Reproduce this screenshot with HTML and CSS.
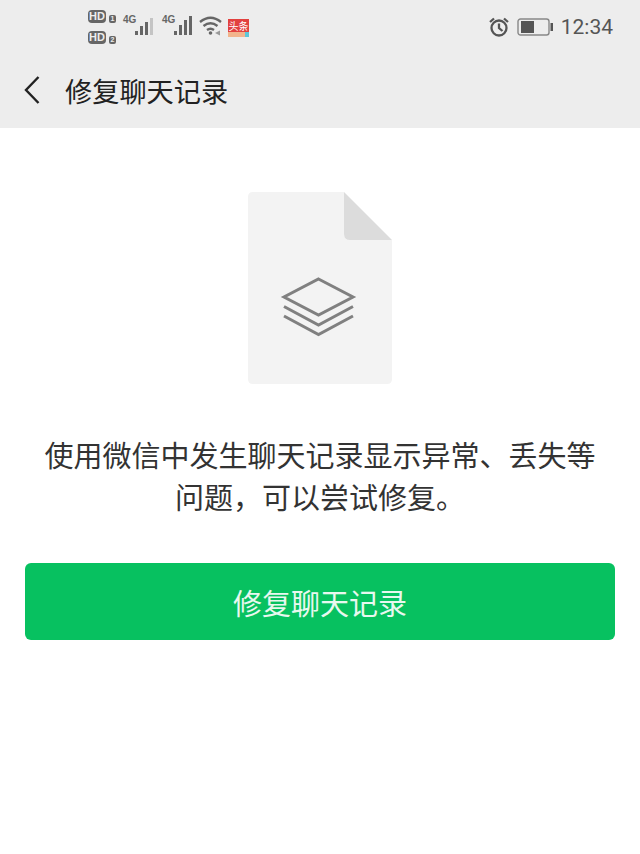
FILE: index.html
```html
<!DOCTYPE html>
<html lang="zh-CN">
<head>
  <meta charset="UTF-8" />
  <title>修复聊天记录</title>
  <link rel="stylesheet" href="styles.css">
</head>
<body>
  <header class="top">
    <div class="status">
      <div class="status-left">
        <div class="sims">
          <div class="sim"><span class="hd">HD</span><span class="sim-num">1</span></div>
          <div class="sim"><span class="hd">HD</span><span class="sim-num">2</span></div>
        </div>
        <div class="signal first">
          <span class="net">4G</span>
          <svg width="20" height="21" viewBox="0 0 20 21">
            <rect x="1" y="17" width="3" height="4" fill="#666"/>
            <rect x="6" y="12" width="3" height="9" fill="#666"/>
            <rect x="11" y="8" width="3" height="13" fill="#666"/>
            <rect x="16" y="4" width="3" height="17" fill="#c4c4c4"/>
          </svg>
        </div>
        <div class="signal">
          <span class="net">4G</span>
          <svg width="20" height="21" viewBox="0 0 20 21">
            <rect x="1" y="17" width="3" height="4" fill="#666"/>
            <rect x="6" y="11" width="3" height="10" fill="#666"/>
            <rect x="11" y="6" width="3" height="15" fill="#666"/>
            <rect x="16" y="2" width="3" height="19" fill="#666"/>
          </svg>
        </div>
        <svg class="wifi" width="25" height="20" viewBox="0 0 25 20" fill="none" stroke="#666" stroke-width="2.4">
          <path d="M1 6 Q11.5 -2.5 22 6"/>
          <path d="M4.5 10 Q11.5 4.5 18.5 10"/>
          <path d="M8 14 Q11.5 11.5 15 14"/>
          <circle cx="11.5" cy="17" r="1.8" fill="#666" stroke="none"/>
          <path d="M16 17 l5 -2.5 v5 z" fill="#999" stroke="none"/>
        </svg>
        <div class="toutiao">
          <span class="toutiao-name">头条</span>
          <span class="toutiao-strip"><span class="toutiao-corner"></span></span>
        </div>
      </div>
      <div class="status-right">
        <svg class="alarm" width="22" height="22" viewBox="0 0 22 22" fill="none" stroke="#555" stroke-width="2.3">
          <circle cx="11" cy="12" r="7.5"/>
          <path d="M11 7.5 V12 L14.5 15"/>
          <path d="M2 6 L6 2.5"/>
          <path d="M20 6 L16 2.5"/>
        </svg>
        <svg width="36" height="18" viewBox="0 0 36 18">
          <rect x="1" y="1" width="31" height="16" rx="2.5" fill="none" stroke="#888" stroke-width="1.4"/>
          <rect x="4" y="3" width="13" height="12" fill="#555"/>
          <rect x="33.5" y="5" width="2.5" height="8" fill="#555"/>
        </svg>
        <span class="time">12:34</span>
      </div>
    </div>
    <div class="nav">
      <svg class="back" width="18" height="30" viewBox="0 0 18 30" fill="none" stroke="#222" stroke-width="2.4">
        <path d="M15.5 2 L3 15 L15.5 28"/>
      </svg>
      <h1 class="title">修复聊天记录</h1>
    </div>
  </header>

  <main class="content">
    <svg class="doc" width="144" height="192" viewBox="0 0 144 192">
      <path d="M5 0 H96 V42 Q96 48 102 48 H144 V187 Q144 192 139 192 H5 Q0 192 0 187 V5 Q0 0 5 0 Z" fill="#f3f3f3"/>
      <path d="M96 0 L144 48 H102 Q96 48 96 42 Z" fill="#dcdcdc"/>
      <g fill="none" stroke="#808080" stroke-width="3">
        <path d="M70.5 87 L105 105 L70.5 123 L36 105 Z"/>
        <path d="M36 114.5 L70.5 133 L105 114.5"/>
        <path d="M36 124 L70.5 142.5 L105 124"/>
      </g>
    </svg>
    <p class="desc">使用微信中发生聊天记录显示异常、丢失等<br>问题，可以尝试修复。</p>
    <button class="repair">修复聊天记录</button>
  </main>
</body>
</html>
```

FILE: styles.css
```css
body {
  margin: 0;
  background: #fff;
  font-family: "Noto Sans CJK SC", "Liberation Sans", sans-serif;
  color: #333;
}

.top {
  background: #ededed;
  height: 128px;
}

.status {
  height: 52px;
  display: flex;
  justify-content: space-between;
  padding: 0 27px 0 88px;
}

.status-left {
  display: flex;
  align-items: flex-start;
}

.sims {
  margin-top: 10px;
  display: flex;
  flex-direction: column;
  gap: 8px;
  width: 34px;
}

.sim {
  display: flex;
  align-items: flex-start;
  gap: 3px;
  height: 13px;
}

.hd {
  background: #666;
  color: #ededed;
  border-radius: 4px;
  width: 18px;
  height: 13px;
  font: bold 11px/13px "Liberation Sans", sans-serif;
  text-align: center;
}

.sim-num {
  background: #666;
  color: #ededed;
  border-radius: 2px;
  width: 7px;
  height: 8px;
  margin-top: 5px;
  font: bold 7px/8px "Liberation Sans", sans-serif;
  text-align: center;
}

.signal {
  display: flex;
  align-items: flex-start;
  margin-left: 8px;
  margin-top: 14px;
}

.signal.first {
  margin-left: 1px;
}

.net {
  width: 11px;
  font: bold 10px/11px "Liberation Sans Narrow", "Liberation Sans", sans-serif;
  color: #666;
}

.wifi {
  margin-left: 6px;
  margin-top: 16px;
}

.toutiao {
  margin-left: 4px;
  margin-top: 19px;
  width: 21px;
  height: 18px;
  background: #e2413f;
  display: flex;
  flex-direction: column;
  align-items: center;
}

.toutiao-name {
  color: #fff;
  font-size: 10px;
  line-height: 13px;
  white-space: nowrap;
}

.toutiao-strip {
  width: 100%;
  height: 5px;
  background: #f2b48c;
  display: flex;
  justify-content: flex-end;
}

.toutiao-corner {
  width: 4px;
  background: #5cc6d8;
}

.status-right {
  display: flex;
  align-items: center;
  gap: 8px;
  height: 53px;
}

.alarm {
  margin-right: -1px;
}

.time {
  font: 21px "Roboto", sans-serif;
  color: #555;
}

.nav {
  display: flex;
  align-items: center;
  height: 76px;
  padding-left: 23px;
}

.title {
  margin: 0 0 0 24px;
  font-size: 27.2px;
  font-weight: 400;
  color: #222;
}

.content {
  display: flex;
  flex-direction: column;
  align-items: center;
  padding-top: 64px;
}

.desc {
  margin: 49px 0 0;
  font-size: 29px;
  line-height: 42px;
  text-align: center;
  color: #333;
  white-space: nowrap;
}

.repair {
  margin-top: 46px;
  width: 590px;
  height: 77px;
  background: #07c160;
  border: none;
  border-radius: 6px;
  color: #e8f8ef;
  font-family: inherit;
  font-size: 29px;
  cursor: pointer;
}
```
